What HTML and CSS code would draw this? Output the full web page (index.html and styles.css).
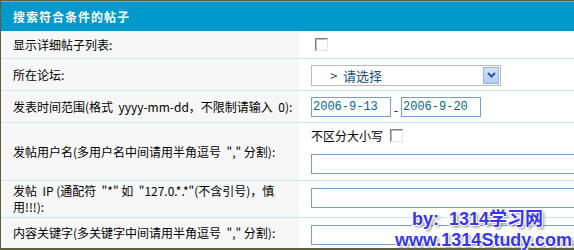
FILE: index.html
```html
<!DOCTYPE html>
<html lang="zh-CN">

<head>
    <meta charset="UTF-8">
    <title>搜索符合条件的帖子</title>
    <link rel="stylesheet" href="styles.css">
</head>

<body>

    <div class="forum">
        <div class="forum-head">搜索符合条件的帖子</div>

        <!-- 显示详细帖子列表 -->
        <div class="row row-1">
            <div class="label">显示详细帖子列表:</div>
            <div class="field"><input type="checkbox" class="check"></div>
        </div>

        <!-- 所在论坛 -->
        <div class="row row-2">
            <div class="label">所在论坛:</div>
            <div class="field">
                <div class="select">
                    <span class="select-text">&gt;&nbsp;&nbsp;请选择</span>
                    <span class="select-btn">
                        <svg width="9" height="6" viewBox="0 0 9 6"><path d="M1 1 L4.5 4.5 L8 1" fill="none" stroke="#2d4fb5" stroke-width="2"/></svg>
                    </span>
                </div>
            </div>
        </div>

        <!-- 发表时间范围 -->
        <div class="row row-3">
            <div class="label">发表时间范围(格式&nbsp; yyyy-mm-dd，不限制请输入&nbsp; 0):</div>
            <div class="field">
                <input type="text" class="date" value="2006-9-13">
                <span class="dash">-</span>
                <input type="text" class="date" value="2006-9-20">
            </div>
        </div>

        <!-- 发帖用户名 -->
        <div class="row row-4">
            <div class="label">发帖用户名(多用户名中间请用半角逗号&nbsp; "," 分割):</div>
            <div class="field field-stack">
                <div class="case">不区分大小写 <input type="checkbox" class="check"></div>
                <input type="text" class="wide">
            </div>
        </div>

        <!-- 发帖 IP -->
        <div class="row row-5">
            <div class="label">发帖&nbsp; IP (通配符&nbsp; "*" 如&nbsp; "127.0.*.*"(不含引号)，慎<br>用!!!):</div>
            <div class="field"><input type="text" class="wide"></div>
        </div>

        <!-- 内容关键字 -->
        <div class="row row-6">
            <div class="label">内容关键字(多关键字中间请用半角逗号&nbsp; "," 分割):</div>
            <div class="field"><input type="text" class="wide"></div>
        </div>
    </div>

    <div class="watermark">
        <div class="wm-1">by:&nbsp; 1314学习网</div>
        <div class="wm-2">www.1314Study.com</div>
    </div>

</body>

</html>
```

FILE: styles.css
```css
body {
    margin: 0;
    font-family: "Noto Sans CJK SC", "Liberation Sans", sans-serif;
    font-size: 12px;
    color: #000;
    overflow: hidden;
}

.forum {
    border-top: 1px solid #5e5e3a;
    border-left: 1px solid #5e5e3a;
    border-bottom: 2px solid #5e5e3a;
    overflow: hidden;
}

.forum-head {
    height: 29px;
    border-top: 1px solid #7fa6d8;
    background-color: #0099cc;
    color: #fff;
    font-weight: bold;
    letter-spacing: 1px;
    padding-left: 12px;
    display: flex;
    align-items: center;
}

.row {
    display: grid;
    grid-template-columns: 298px 1fr;
    border-bottom: 1px solid #c8e8f8;
    box-sizing: border-box;
}

.row-1 { height: 28px; }
.row-2 { height: 32px; }
.row-3 { height: 32px; }
.row-4 { height: 58px; }
.row-5 { height: 37px; }
.row-6 { height: 30px; border-bottom: none; }

.label {
    background-color: #f7f7f7;
    padding-left: 12px;
    display: flex;
    align-items: center;
    line-height: 16px;
    white-space: nowrap;
}

.row-5 .label {
    display: block;
    padding-top: 2px;
}

.field {
    background-color: #fff;
    padding-left: 12px;
    display: flex;
    align-items: center;
}

.check {
    appearance: none;
    -webkit-appearance: none;
    width: 13px;
    height: 13px;
    margin: 0 0 0 4px;
    box-sizing: border-box;
    border-top: 1px solid #808070;
    border-left: 1px solid #808070;
    border-right: 1px solid #e4e4e4;
    border-bottom: 1px solid #e4e4e4;
    background-color: #fff;
    box-shadow: inset 1px 1px 0 #c0c0b8;
}

.select {
    width: 190px;
    height: 21px;
    box-sizing: border-box;
    border: 1px solid #bbbbbb;
    display: flex;
    align-items: center;
    justify-content: space-between;
    margin-top: 1px;
}

.select-text {
    padding-left: 18px;
    font-size: 13px;
    color: #1c4f86;
}

.select-btn {
    width: 16px;
    height: 17px;
    margin-right: 1px;
    box-sizing: border-box;
    border: 1px solid #93b4ea;
    background: linear-gradient(#d3e3fb, #b4cdf3);
    display: flex;
    align-items: center;
    justify-content: center;
}

input[type="text"] {
    height: 20px;
    box-sizing: border-box;
    border: 1px solid #7a9ed2;
    padding: 0 1px;
    margin: 0;
    font-family: "Liberation Mono", monospace;
    font-size: 12px;
    color: #0a5f93;
    outline: none;
}

.date {
    width: 80px;
}

.row-3 .field {
    padding-top: 1px;
}

.dash {
    width: 10px;
    text-align: center;
    align-self: flex-end;
    line-height: 12px;
    margin-bottom: 6px;
}

.wide {
    width: 300px;
}

.field-stack {
    flex-direction: column;
    align-items: flex-start;
    justify-content: flex-start;
    padding-top: 6px;
}

.case {
    display: flex;
    align-items: center;
    height: 13px;
    margin-bottom: 12px;
    gap: 3px;
}

.row-5 .field {
    padding-bottom: 3px;
}

.row-6 .field {
    padding-top: 3px;
}

.watermark {
    position: absolute;
    left: 395px;
    top: 209px;
    font-family: "Liberation Sans", "Noto Sans CJK SC", sans-serif;
    font-size: 18px;
    font-weight: bold;
    line-height: 21px;
    color: #3636ee;
    text-shadow: -1px -1px 0 #fff, 1px -1px 0 #fff, -1px 1px 0 #fff, 1px 1px 0 #fff, 2px 2px 3px #777;
    white-space: nowrap;
}

.wm-1 {
    padding-left: 17px;
}
```
